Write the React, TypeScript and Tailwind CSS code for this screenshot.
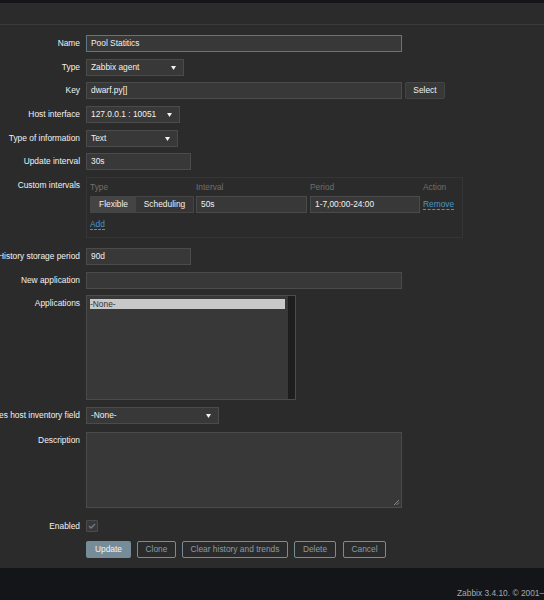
import React from "react";

const inputCls =
  "h-[17px] border border-[#4b4b4b] bg-[#383838] px-[4px] text-[8.4px] leading-[15px] text-[#f2f2f2] outline-none whitespace-nowrap";

const Arrow = () => (
  <svg width="5" height="4" viewBox="0 0 5 4" className="shrink-0">
    <polygon points="0,0 5,0 2.5,4" fill="#f2f2f2" />
  </svg>
);

const Select = ({ value, width }: { value: string; width: string }) => (
  <div className={`${inputCls} ${width} flex items-center justify-between pr-[7px]`}>
    <span>{value}</span>
    <Arrow />
  </div>
);

const Row = ({
  label,
  top,
  children,
}: {
  label: string;
  top: string;
  children: React.ReactNode;
}) => (
  <div className={`flex items-start gap-[6px] ${top}`}>
    <div className="flex h-[17px] w-[80px] shrink-0 items-center justify-end whitespace-nowrap text-[8.4px] text-[#f2f2f2]">
      {label}
    </div>
    {children}
  </div>
);

const Btn = ({ text, width }: { text: string; width: string }) => (
  <div
    className={`flex h-[17px] ${width} items-center justify-center whitespace-nowrap rounded-[2px] border border-[#768d99] text-[8.4px] text-[#8a9ba5]`}
  >
    {text}
  </div>
);

export default function App() {
  return (
    <div
      className="relative h-[600px] w-[544px] overflow-hidden bg-[#131518]"
      style={{ fontFamily: '"Liberation Sans", Arial, sans-serif' }}
    >
      <div className="mt-[3px] h-[565px] bg-[#2b2b2b]">
        <div className="h-[22px] border-b border-[#3a3a3a]" />

        <div className="flex flex-col pt-[10px]">
          <Row label="Name" top="">
            <div className={`${inputCls} w-[316px] border-[#5f7583]`}>Pool Statitics</div>
          </Row>

          <Row label="Type" top="mt-[7px]">
            <Select value="Zabbix agent" width="w-[98px]" />
          </Row>

          <Row label="Key" top="mt-[6px]">
            <div className={`${inputCls} w-[316px]`}>dwarf.py[]</div>
            <div className="-ml-[3px] flex h-[17px] w-[40px] items-center justify-center rounded-[2px] border border-[#454545] bg-[#383838] text-[8.4px] text-[#f2f2f2]">
              Select
            </div>
          </Row>

          <Row label="Host interface" top="mt-[7px]">
            <Select value="127.0.0.1 : 10051" width="w-[94px]" />
          </Row>

          <Row label="Type of information" top="mt-[7px]">
            <Select value="Text" width="w-[92px]" />
          </Row>

          <Row label="Update interval" top="mt-[6px]">
            <div className={`${inputCls} w-[105px]`}>30s</div>
          </Row>

          <Row label="Custom intervals" top="mt-[7px]">
            <div className="h-[61px] w-[377px] border border-[#353535] px-[3px] pt-[1px] text-[8.4px]">
              <div className="flex h-[17px] items-center text-[#6f6f6f]">
                <span className="w-[106px]">Type</span>
                <span className="w-[114px]">Interval</span>
                <span className="w-[113px]">Period</span>
                <span>Action</span>
              </div>
              <div className="flex items-center">
                <div className="flex h-[17px] w-[104px] border border-[#454545]">
                  <div className="flex w-[45px] items-center justify-center bg-[#444444] text-[#f2f2f2]">
                    Flexible
                  </div>
                  <div className="flex flex-1 items-center justify-center bg-[#363636] text-[#f2f2f2]">
                    Scheduling
                  </div>
                </div>
                <div className={`${inputCls} ml-[2px] w-[111px] text-[#8a8a8a]`}>50s</div>
                <div className={`${inputCls} ml-[3px] w-[110px] text-[#c8c8c8]`}>1-7,00:00-24:00</div>
                <span className="ml-[3px] border-b border-dashed border-[#4796c4] leading-[10px] text-[#4796c4]">
                  Remove
                </span>
              </div>
              <div className="mt-[6px] flex">
                <span className="border-b border-dashed border-[#4796c4] leading-[10px] text-[#4796c4]">
                  Add
                </span>
              </div>
            </div>
          </Row>

          <Row label="History storage period" top="mt-[10px]">
            <div className={`${inputCls} w-[105px]`}>90d</div>
          </Row>

          <Row label="New application" top="mt-[7px]">
            <div className={`${inputCls} w-[316px] outline outline-[3px] outline-[#3b5441]`} />
          </Row>

          <Row label="Applications" top="mt-[6px]">
            <div className="flex h-[105px] w-[210px] border border-[#4b4b4b] bg-[#383838]">
              <div className="flex-1 p-[3px]">
                <div className="h-[10px] bg-[#c8c8c8] text-[8.4px] leading-[10px] text-[#333333]">-None-</div>
              </div>
              <div className="w-[7px] bg-[#1e1e1e]" />
            </div>
          </Row>

          <Row label="Populates host inventory field" top="mt-[7px]">
            <Select value="-None-" width="w-[133px]" />
          </Row>

          <Row label="Description" top="mt-[8px]">
            <div className="relative h-[76px] w-[316px] border border-[#4b4b4b] bg-[#383838]">
              <svg width="7" height="7" viewBox="0 0 7 7" className="absolute bottom-[1px] right-[1px]">
                <path d="M6 1 L1 6 M6 3.5 L3.5 6" stroke="#8a8a8a" strokeWidth="1" />
              </svg>
            </div>
          </Row>

          <Row label="Enabled" top="mt-[10px]">
            <div className="mt-[2px] flex h-[12px] w-[12px] items-center justify-center rounded-[1px] border border-[#4b4b4b] bg-[#383838]">
              <svg width="8" height="6" viewBox="0 0 8 6">
                <path d="M1 3 L3 5 L7 1" stroke="#6e7f89" strokeWidth="1.3" fill="none" />
              </svg>
            </div>
          </Row>

          <div className="mt-[6px] flex gap-[6px] pl-[86px]">
            <div className="flex h-[17px] w-[45px] items-center justify-center rounded-[2px] bg-[#768d99] text-[8.4px] text-[#f2f2f2]">
              Update
            </div>
            <Btn text="Clone" width="w-[39px]" />
            <Btn text="Clear history and trends" width="w-[106px]" />
            <Btn text="Delete" width="w-[42px]" />
            <div className="ml-[1px]">
              <Btn text="Cancel" width="w-[43px]" />
            </div>
          </div>
        </div>
      </div>

      <div className="absolute left-[457px] top-[588px] whitespace-nowrap text-[8.4px] leading-[10px] text-[#a8a8a8]">
        Zabbix 3.4.10. © 2001–2018
      </div>
    </div>
  );
}
